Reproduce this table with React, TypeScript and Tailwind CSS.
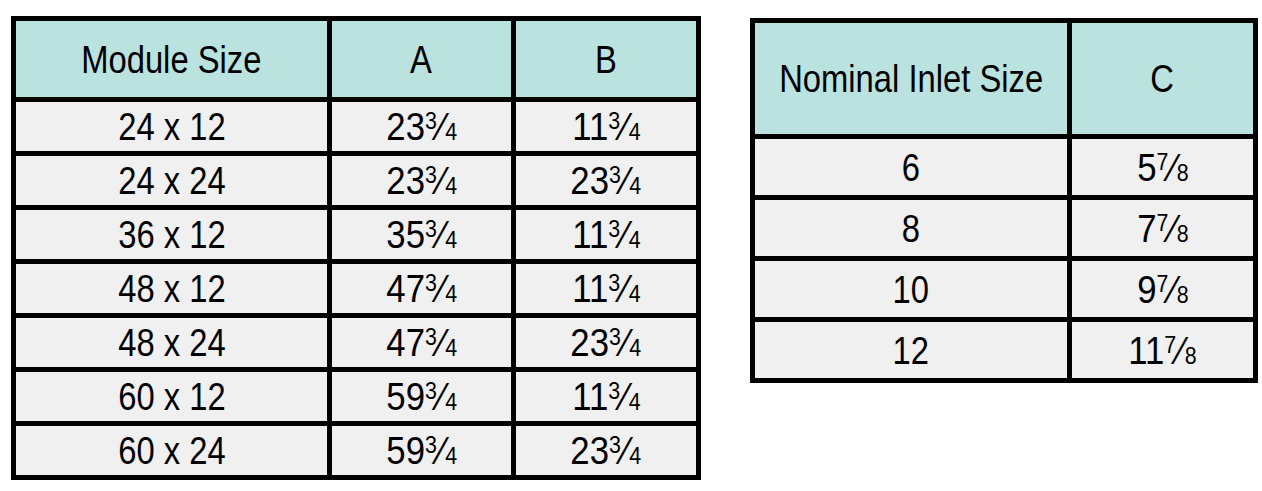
const font = { fontFamily: '"Liberation Sans", Arial, sans-serif' };

const moduleRows: [string, string, string][] = [
  ["24 x 12", "23 3/4", "11 3/4"],
  ["24 x 24", "23 3/4", "23 3/4"],
  ["36 x 12", "35 3/4", "11 3/4"],
  ["48 x 12", "47 3/4", "11 3/4"],
  ["48 x 24", "47 3/4", "23 3/4"],
  ["60 x 12", "59 3/4", "11 3/4"],
  ["60 x 24", "59 3/4", "23 3/4"],
];

const inletRows: [string, string][] = [
  ["6", "5 7/8"],
  ["8", "7 7/8"],
  ["10", "9 7/8"],
  ["12", "11 7/8"],
];

// "23 3/4" -> 23 with a built-up fraction
function Mixed({ value }: { value: string }) {
  const [whole, frac] = value.split(" ");
  const [n, d] = frac.split("/");
  return (
    <span className="inline-block scale-x-[1.06]">
      {whole}
      <span className="relative -top-[11px] text-[24px]">{n}</span>
      <span className="ml-[2px] mr-[1px]">⁄</span>
      <span className="text-[24px]">{d}</span>
    </span>
  );
}

// condensed look: the picture uses a narrow face we don't have
function T({ children }: { children: React.ReactNode }) {
  return <span className="inline-block scale-x-[0.84] whitespace-nowrap">{children}</span>;
}

function Head({ children }: { children: React.ReactNode }) {
  return (
    <div className="flex items-center justify-center bg-[#bae2de]">
      <T>{children}</T>
    </div>
  );
}

function Cell({ children }: { children: React.ReactNode }) {
  return (
    <div className="flex items-center justify-center bg-[#f0f0f0]">
      <T>{children}</T>
    </div>
  );
}

export default function App() {
  return (
    <main className="flex h-[491px] items-start bg-white pl-[11px] pt-[16px] text-[39px] leading-none text-black" style={font}>
      <div className="grid grid-cols-[311px_179px_180px] grid-rows-[76px_repeat(7,49px)] gap-[5px] bg-black p-[5px]">
        <Head>Module Size</Head>
        <Head>A</Head>
        <Head>B</Head>
        {moduleRows.map((r) => (
          <>
            <Cell key={r[0]}>{r[0]}</Cell>
            <Cell key={r[0] + "a"}>
              <Mixed value={r[1]} />
            </Cell>
            <Cell key={r[0] + "b"}>
              <Mixed value={r[2]} />
            </Cell>
          </>
        ))}
      </div>
      <div className="ml-[49px] mt-[2px] grid grid-cols-[312px_181px] grid-rows-[111px_repeat(4,56px)] gap-[5px] bg-black p-[5px]">
        <Head>Nominal Inlet Size</Head>
        <Head>C</Head>
        {inletRows.map((r) => (
          <>
            <Cell key={r[0]}>{r[0]}</Cell>
            <Cell key={r[0] + "c"}>
              <Mixed value={r[1]} />
            </Cell>
          </>
        ))}
      </div>
    </main>
  );
}
